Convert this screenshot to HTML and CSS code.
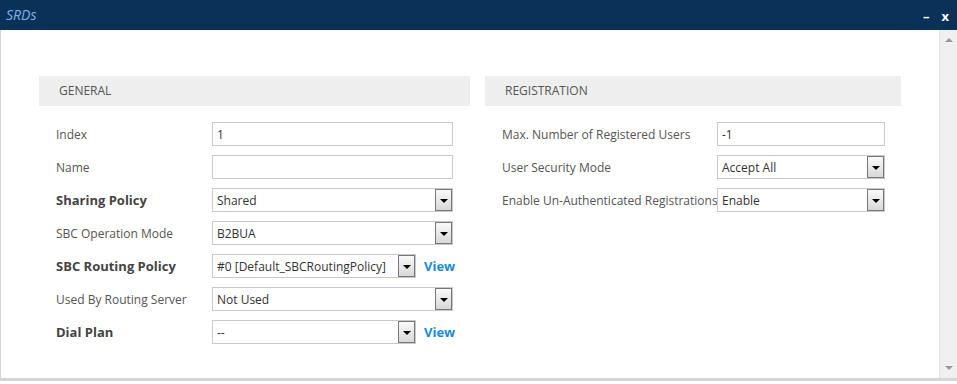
FILE: index.html
```html
<!DOCTYPE html>
<html lang="en">
<head>
  <meta charset="UTF-8" />
  <title>SRDs</title>
  <link rel="stylesheet" href="styles.css">
</head>
<body>
  <div class="window">
    <div class="titlebar">
      <span class="title">SRDs</span>
      <span class="controls"><span class="min">&ndash;</span><span class="close">x</span></span>
    </div>
    <div class="frame">
      <div class="content">
        <div class="panel left">
          <div class="panel-head">GENERAL</div>
          <div class="rows">
            <div class="row"><label>Index</label><div class="field"><input class="text" value="1" /></div></div>
            <div class="row"><label>Name</label><div class="field"><input class="text" value="" /></div></div>
            <div class="row"><label class="bold">Sharing Policy</label><div class="field"><div class="select"><span>Shared</span><i class="arrow"></i></div></div></div>
            <div class="row"><label>SBC Operation Mode</label><div class="field"><div class="select"><span>B2BUA</span><i class="arrow"></i></div></div></div>
            <div class="row"><label class="bold">SBC Routing Policy</label><div class="field"><div class="select short"><span>#0 [Default_SBCRoutingPolicy]</span><i class="arrow"></i></div><a class="view">View</a></div></div>
            <div class="row"><label>Used By Routing Server</label><div class="field"><div class="select"><span>Not Used</span><i class="arrow"></i></div></div></div>
            <div class="row"><label class="bold">Dial Plan</label><div class="field"><div class="select short"><span>--</span><i class="arrow"></i></div><a class="view">View</a></div></div>
          </div>
        </div>
        <div class="panel right">
          <div class="panel-head">REGISTRATION</div>
          <div class="rows">
            <div class="row"><label>Max. Number of Registered Users</label><div class="field"><input class="text" value="-1" /></div></div>
            <div class="row"><label>User Security Mode</label><div class="field"><div class="select"><span>Accept All</span><i class="arrow"></i></div></div></div>
            <div class="row"><label>Enable Un-Authenticated Registrations</label><div class="field"><div class="select"><span>Enable</span><i class="arrow"></i></div></div></div>
          </div>
        </div>
      </div>
      <div class="scrollbar">
        <i class="up"></i>
        <i class="down"></i>
      </div>
    </div>
    <div class="bottom"></div>
  </div>
</body>
</html>
```

FILE: styles.css
```css
body {
  margin: 0;
  font-family: 'Open Sans', sans-serif;
  color: #444;
  background: #fff;
}

.window {
  width: 957px;
  height: 384px;
  display: flex;
  flex-direction: column;
}

.titlebar {
  height: 30px;
  background: #0b3159;
  display: flex;
  align-items: center;
  justify-content: space-between;
  padding: 0 8px 0 6px;
  box-sizing: border-box;
  flex-shrink: 0;
}

.title {
  color: #7fb2e5;
  font-style: italic;
  font-size: 14px;
  margin-top: -2px;
}

.controls {
  color: #fff;
  font-weight: bold;
  font-size: 13px;
  display: flex;
  gap: 12px;
  margin-top: 2px;
}

.frame {
  flex: 1;
  display: flex;
  border-left: 1px solid #d5d5d8;
  min-height: 0;
}

.content {
  flex: 1;
  display: flex;
  gap: 15px;
  padding: 46px 0 0 38px;
}

.panel.left {
  width: 431px;
}

.panel.right {
  width: 416px;
}

.panel-head {
  height: 30px;
  line-height: 30px;
  background: #eeeeee;
  padding-left: 20px;
  font-size: 12px;
  color: #555;
}

.rows {
  padding: 16px 0 0 17px;
  display: flex;
  flex-direction: column;
  gap: 9px;
}

.row {
  display: flex;
  align-items: center;
  height: 24px;
}

.row label {
  width: 156px;
  font-size: 12px;
  color: #555;
  white-space: nowrap;
}

.right .row label {
  width: 215px;
}

.row label.bold {
  font-weight: bold;
  font-size: 13px;
  color: #444;
}

.field {
  display: flex;
  align-items: center;
}

.text,
.select {
  width: 241px;
  height: 24px;
  box-sizing: border-box;
  border: 1px solid #c6c9cf;
  background: #fff;
  font-family: 'Open Sans', sans-serif;
  font-size: 12px;
  color: #333;
  padding: 0 4px;
  margin: 0;
  outline: none;
}

.right .text,
.right .select {
  width: 168px;
}

.select {
  display: flex;
  align-items: center;
  justify-content: space-between;
  padding-right: 0;
}

.select.short {
  width: 204px;
}

.arrow {
  width: 17px;
  height: 22px;
  box-sizing: border-box;
  border: 1px solid #777;
  background: linear-gradient(#fafafa, #d8d8d8);
  position: relative;
}

.arrow::after {
  content: '';
  position: absolute;
  left: 4px;
  top: 9px;
  border-left: 4px solid transparent;
  border-right: 4px solid transparent;
  border-top: 4px solid #000;
}

.view {
  color: #1a8bd6;
  font-weight: bold;
  font-size: 13px;
  margin-left: 8px;
}

.scrollbar {
  width: 17px;
  background: #f0f0f0;
  border-left: 1px solid #e6e6e6;
  position: relative;
  flex-shrink: 0;
}

.scrollbar .up,
.scrollbar .down {
  position: absolute;
  left: 5px;
  border-left: 4px solid transparent;
  border-right: 4px solid transparent;
}

.scrollbar .up {
  top: 8px;
  border-bottom: 4px solid #999;
}

.scrollbar .down {
  bottom: 8px;
  border-top: 4px solid #999;
}

.bottom {
  height: 6px;
  border-top: 3px solid #d5d5d8;
  box-sizing: border-box;
  flex-shrink: 0;
}
```
